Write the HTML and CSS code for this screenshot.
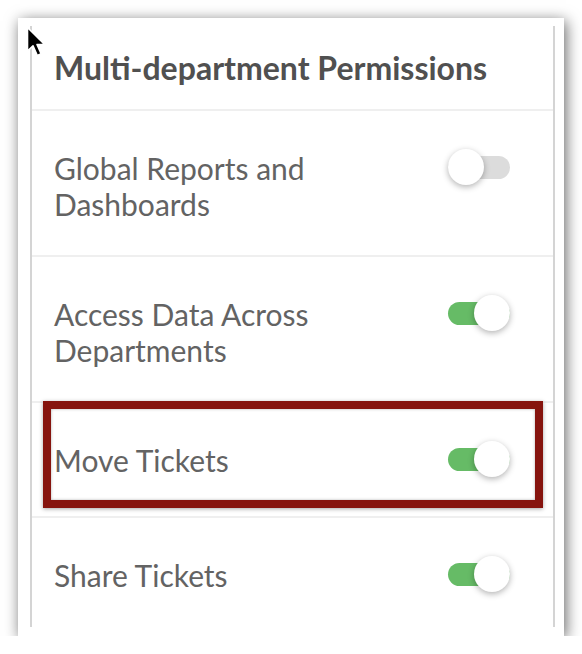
FILE: index.html
```html
<!DOCTYPE html>
<html lang="en">
<head>
  <meta charset="UTF-8" />
  <title>Multi-department Permissions</title>
  <link rel="stylesheet" href="styles.css">
</head>
<body>
  <div class="shot">
    <div class="panel">
      <h2 class="panel-title">Multi-department Permissions</h2>

      <div class="perm">
        <span class="perm-label">Global Reports and<br>Dashboards</span>
        <span class="toggle"></span>
      </div>

      <div class="perm">
        <span class="perm-label">Access Data Across<br>Departments</span>
        <span class="toggle on"></span>
      </div>

      <div class="perm single">
        <span class="perm-label">Move Tickets</span>
        <span class="toggle on"></span>
        <div class="mark"></div>
      </div>

      <div class="perm single">
        <span class="perm-label">Share Tickets</span>
        <span class="toggle on"></span>
      </div>
    </div>

    <svg class="cursor" width="22" height="32" viewBox="0 0 22 32">
      <path d="M1.5 1.5 L1.5 25 L7 19.8 L11.3 29.5 L15.2 27.8 L11 18.5 L18.6 18.5 Z" fill="#000" stroke="#fff" stroke-width="1.6" stroke-linejoin="round" />
    </svg>
  </div>
</body>
</html>
```

FILE: styles.css
```css
body {
  margin: 0;
  background: #fff;
  font-family: 'Lato', 'Open Sans', sans-serif;
}

.shot {
  position: relative;
  margin: 18px 0 0 18px;
  width: 546px;
  height: 618px;
  box-sizing: border-box;
  padding: 8px 9px 9px 12px;
  background: #fff;
  box-shadow: 2px 3px 14px rgba(0, 0, 0, 0.6);
}

.panel {
  height: 601px;
  overflow: hidden;
  border-left: 2px solid #d4d4d4;
  border-right: 2px solid #d4d4d4;
}

.panel-title {
  margin: 0;
  height: 85px;
  box-sizing: border-box;
  padding: 22px 0 0 22px;
  font-size: 32px;
  font-weight: 700;
  color: #505050;
  border-bottom: 2px solid #efefef;
}

.perm {
  position: relative;
  display: flex;
  justify-content: space-between;
  align-items: flex-start;
  padding: 39px 43px 33px 22px;
  border-bottom: 2px solid #efefef;
}

.perm.single {
  padding-bottom: 38px;
}

.perm-label {
  font-size: 30px;
  line-height: 36px;
  color: #636363;
}

.toggle {
  position: relative;
  flex: none;
  width: 62px;
  height: 23px;
  margin-top: 6px;
  border-radius: 12px;
  background: #dcdcdc;
}

.toggle::after {
  content: "";
  position: absolute;
  top: -7px;
  left: 0;
  width: 36px;
  height: 36px;
  border-radius: 50%;
  background: #fff;
  box-shadow: 0 2px 6px rgba(0, 0, 0, 0.3);
}

.toggle.on {
  background: #66bb66;
}

.toggle.on::after {
  left: 26px;
}

.mark {
  position: absolute;
  top: -2px;
  left: 11px;
  width: 500px;
  height: 107px;
  box-sizing: border-box;
  border: 8px solid #86140e;
  box-shadow: 0 1px 4px rgba(0, 0, 0, 0.35), inset 0 0 3px rgba(0, 0, 0, 0.3);
}

.cursor {
  position: absolute;
  top: 8px;
  left: 8px;
}
```
